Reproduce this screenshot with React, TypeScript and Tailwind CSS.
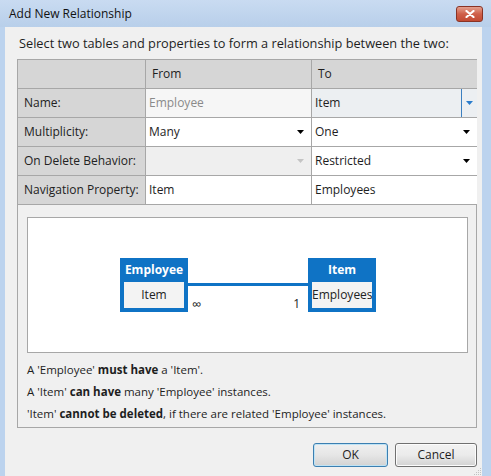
const Caret = ({ color = "#000" }: { color?: string }) => (
  <svg width="7" height="4" viewBox="0 0 7 4" className="shrink-0">
    <path d="M0 0h7L3.5 4z" fill={color} />
  </svg>
);

const EntityBox = ({ title, prop }: { title: string; prop: string }) => (
  <div className="w-[68px] h-[54px] bg-[#0f73c5] flex flex-col">
    <div className="h-[24px] leading-[24px] text-center text-white font-bold">{title}</div>
    <div className="mx-[4px] h-[26px] leading-[26px] bg-[#f3f3f3] text-center text-[#222]">{prop}</div>
  </div>
);

const labelCell = "h-[29px] border-r border-b border-[#a7a7a7] bg-[#d6d6d6] flex items-center pl-[6px] text-[#222]";
const valueCell = "h-[29px] border-r border-b border-[#a7a7a7] flex items-center pl-[3px] pr-[7px]";

export default function App() {
  return (
    <div className="w-[491px] h-[476px] bg-[#bcd3ee] flex flex-col overflow-hidden text-[12px] text-[#1e1e1e] font-['Segoe_UI','Open_Sans',sans-serif]">
      {/* title bar */}
      <div className="h-[27px] shrink-0 flex items-center pl-[9px] pr-[8px] bg-gradient-to-b from-[#c9dbf1] to-[#b8cfea]">
        <span className="text-[#111]">Add New Relationship</span>
        <div className="ml-auto w-[27px] h-[16px] rounded-[3px] border border-[#8a3325] bg-gradient-to-b from-[#e3a08f] via-[#cf5f49] to-[#c24a33] flex items-center justify-center">
          <svg width="10" height="8" viewBox="0 0 10 8">
            <path d="M1.5 1L8.5 7M8.5 1L1.5 7" stroke="#fff" strokeWidth="2.2" strokeLinecap="round" />
          </svg>
        </div>
      </div>

      {/* client area */}
      <div className="flex-1 ml-[5px] mr-[9px] bg-[#f0f0f0] pl-[12px] pr-[5px] pt-[8px] flex flex-col relative">
        <div className="h-[16px] leading-[16px] pl-[2px] text-[12.75px] whitespace-nowrap">
          Select two tables and properties to form a relationship between the two:
        </div>

        <div className="mt-[8px] h-[369px] border border-[#a7a7a7] flex flex-col">
          <div className="grid grid-cols-[128px_166px_165px]">
            <div className={labelCell}></div>
            <div className="h-[29px] border-r border-b border-[#a7a7a7] bg-[#d6d6d6] flex items-center pl-[6px]">From</div>
            <div className="h-[29px] border-b border-[#a7a7a7] bg-[#d6d6d6] flex items-center pl-[6px]">To</div>

            <div className={labelCell}>Name:</div>
            <div className={`${valueCell} bg-[#f6f6f6] text-[#8a8a8a]`}>Employee</div>
            <div className="h-[29px] border-b border-[#a7a7a7] bg-[#eceff2] flex items-center pl-[3px]">
              <span className="flex-1">Item</span>
              <div className="w-[1px] self-stretch bg-[#3b7fc0]"></div>
              <div className="w-[15px] flex justify-center">
                <Caret color="#2a7ccc" />
              </div>
            </div>

            <div className={labelCell}>Multiplicity:</div>
            <div className={`${valueCell} bg-white`}>
              <span className="flex-1">Many</span>
              <Caret />
            </div>
            <div className="h-[29px] border-b border-[#a7a7a7] bg-white flex items-center pl-[3px] pr-[7px]">
              <span className="flex-1">One</span>
              <Caret />
            </div>

            <div className={labelCell}>On Delete Behavior:</div>
            <div className={`${valueCell} bg-[#efefef]`}>
              <span className="flex-1"></span>
              <Caret color="#c4c4c4" />
            </div>
            <div className="h-[29px] border-b border-[#a7a7a7] bg-white flex items-center pl-[3px] pr-[7px]">
              <span className="flex-1">Restricted</span>
              <Caret />
            </div>

            <div className={labelCell}>Navigation Property:</div>
            <div className={`${valueCell} bg-white`}>Item</div>
            <div className="h-[29px] border-b border-[#a7a7a7] bg-white flex items-center pl-[3px]">Employees</div>
          </div>

          {/* relationship diagram */}
          <div className="mt-[12px] ml-[9px] mr-[8px] h-[136px] border border-[#a7a7a7] bg-white flex justify-center pt-[40px] pl-[1px]">
            <EntityBox title="Employee" prop="Item" />
            <div className="w-[120px] flex flex-col">
              <div className="mt-[25px] h-[3px] bg-[#0f73c5]"></div>
              <div className="mt-[10px] flex justify-between pl-[4px] pr-[8px] leading-[16px] text-[#222]">
                <span className="text-[13px]">∞</span>
                <span>1</span>
              </div>
            </div>
            <EntityBox title="Item" prop="Employees" />
          </div>

          <div className="mt-[6px] pl-[9px] flex flex-col leading-[22px] text-[11.5px]">
            <div>
              A 'Employee' <b>must have</b> a 'Item'.
            </div>
            <div>
              A 'Item' <b>can have</b> many 'Employee' instances.
            </div>
            <div>
              'Item' <b>cannot be deleted</b>, if there are related 'Employee' instances.
            </div>
          </div>
        </div>

        <div className="mt-[15px] flex justify-end gap-[7px]">
          <button className="w-[75px] h-[24px] rounded-[3px] border border-[#3c7fb1] bg-gradient-to-b from-[#f0f0f0] via-[#e6e6e6] to-[#d2d2d2] shadow-[inset_0_0_0_1px_#bfe3f5]">
            OK
          </button>
          <button className="w-[82px] h-[24px] rounded-[3px] border border-[#707070] bg-gradient-to-b from-[#f2f2f2] via-[#ebebeb] to-[#d2d2d2] shadow-[inset_0_0_0_1px_#fcfcfc]">
            Cancel
          </button>
        </div>

        {/* resize grip */}
        <svg className="absolute right-0 bottom-0" width="10" height="10" viewBox="0 0 10 10">
          <g fill="#c2c2c2">
            <rect x="8" y="2" width="1" height="1" />
            <rect x="6" y="4" width="1" height="1" />
            <rect x="8" y="4" width="1" height="1" />
            <rect x="4" y="6" width="1" height="1" />
            <rect x="6" y="6" width="1" height="1" />
            <rect x="8" y="6" width="1" height="1" />
            <rect x="2" y="8" width="1" height="1" />
            <rect x="4" y="8" width="1" height="1" />
            <rect x="6" y="8" width="1" height="1" />
            <rect x="8" y="8" width="1" height="1" />
          </g>
        </svg>
      </div>
    </div>
  );
}
